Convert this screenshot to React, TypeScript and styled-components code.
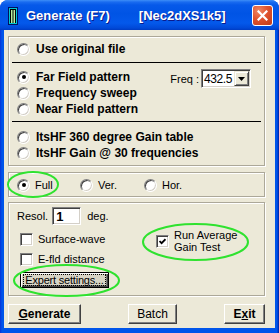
import React from "react"
import styled, { createGlobalStyle } from "styled-components"

/*==================== Global ====================*/

const GlobalStyle = createGlobalStyle`
    html, body {
        margin: 0;
        padding: 0;
        background: #ffffff;
    }

    body {
        font-family: "Liberation Sans", Arial, sans-serif;
        font-size: 11px;
        color: #000000;
    }
`

const SANS = `"Liberation Sans", Arial, sans-serif`

/*==================== Window chrome ====================*/

const Window = styled.div`
    width: 279px;
    height: 333px;
    display: flex;
    flex-direction: column;
    background: linear-gradient(90deg, #0831d9 0, #0055ea 2px, #0055ea 277px, #001ea0 279px);
    border-radius: 8px 8px 0 0;
    overflow: hidden;
`

const TitleBar = styled.div`
    flex: none;
    height: 30px;
    box-sizing: border-box;
    display: flex;
    align-items: center;
    padding: 1px 6px 0 8px;
    background: linear-gradient(
        180deg,
        #3d8ef7 0px,
        #1a6cf0 2px,
        #0659e9 5px,
        #0054e5 14px,
        #0459eb 23px,
        #0049d8 28px,
        #003cc2 30px
    );
    color: #ffffff;
    font: bold 13px ${SANS};
    text-shadow: 1px 1px #0b1a8c;
    white-space: nowrap;
`

const AppIcon = styled.svg`
    flex: none;
    margin-right: 8px;
`

const TitleTag = styled.span`
    margin-left: 29px;
`

const CloseButton = styled.div`
    flex: none;
    margin-left: auto;
    width: 21px;
    height: 21px;
    box-sizing: border-box;
    border: 1px solid #ffffff;
    border-radius: 3px;
    background: radial-gradient(circle at 30% 25%, #ee8866 0%, #e0532e 45%, #c23a17 100%);
    display: flex;
    align-items: center;
    justify-content: center;
`

const Client = styled.div`
    flex: 1;
    margin: 0 4px 5px 4px;
    padding: 6px 10px 4px 4px;
    background: #ece9d8;
    display: flex;
    flex-direction: column;
    box-sizing: border-box;
`

/*==================== Groups ====================*/

const Group = styled.div<{ $pad: string; $mt?: number }>`
    position: relative;
    border: 1px solid #aca899;
    box-shadow: inset 1px 1px #ffffff, 1px 1px #ffffff;
    padding: ${({ $pad }) => $pad};
    margin-top: ${({ $mt }) => $mt || 0}px;
`

const Rule = styled.div<{ $above: number; $below: number }>`
    height: 1px;
    background: #000000;
    margin: ${({ $above, $below }) => `${$above}px 0 ${$below}px -5px`};
`

const FarBlock = styled.div`
    display: flex;
    align-items: flex-start;
`

const OptionColumn = styled.div`
    display: flex;
    flex-direction: column;
`

const OptionRow = styled.label<{ $bold?: boolean }>`
    position: relative;
    display: flex;
    align-items: center;
    height: 16px;
    gap: ${({ $bold }) => ($bold ? 6 : 5)}px;
    font: ${({ $bold }) => ($bold ? `bold 12px ${SANS}` : `11px ${SANS}`)};
    white-space: nowrap;
`

const RadioMark = styled.span<{ $checked?: boolean }>`
    position: relative;
    flex: none;
    width: 13px;
    height: 13px;
    box-sizing: border-box;
    border-radius: 50%;
    background: #ffffff;
    border: 1px solid;
    border-color: #808080 #ffffff #ffffff #808080;
    box-shadow: inset 1px 1px #404040, inset -1px -1px #d4d0c8;

    &::after {
        content: "";
        display: ${({ $checked }) => ($checked ? "block" : "none")};
        position: absolute;
        left: 3.5px;
        top: 3.5px;
        width: 4px;
        height: 4px;
        border-radius: 50%;
        background: #000000;
    }
`

const FreqField = styled.div`
    display: flex;
    align-items: center;
    gap: 2px;
    margin-left: auto;
    margin-right: 10px;
    font: 11px ${SANS};
`

const Combo = styled.div`
    width: 50px;
    height: 19px;
    box-sizing: border-box;
    display: flex;
    align-items: stretch;
    padding: 1px 1px 1px 2px;
    background: #ffffff;
    border: 1px solid;
    border-color: #808080 #ffffff #ffffff #808080;
    box-shadow: inset 1px 1px #404040, inset -1px -1px #d4d0c8;
`

const ComboValue = styled.span`
    flex: 1;
    display: flex;
    align-items: center;
    font: 12px ${SANS};
    letter-spacing: -0.4px;
`

const ComboArrow = styled.span`
    width: 15px;
    box-sizing: border-box;
    background: #ece9d8;
    border: 1px solid;
    border-color: #ece9d8 #404040 #404040 #ece9d8;
    box-shadow: inset 1px 1px #ffffff, inset -1px -1px #808080;
    display: flex;
    align-items: center;
    justify-content: center;
`

const ModeGrid = styled.div`
    display: grid;
    grid-template-columns: 63px 64px auto;
`

/*==================== Settings group ====================*/

const SettingsGrid = styled.div`
    display: grid;
    grid-template-columns: 139px auto;
`

const LeftColumn = styled.div`
    display: flex;
    flex-direction: column;
`

const ResolRow = styled.div`
    display: flex;
    align-items: center;
    height: 18px;
    font: 11px ${SANS};
`

const NumInput = styled.span`
    width: 29px;
    height: 18px;
    box-sizing: border-box;
    margin: 0 6px 0 4px;
    padding-left: 3px;
    display: flex;
    align-items: center;
    background: #ffffff;
    border: 1px solid;
    border-color: #808080 #ffffff #ffffff #808080;
    box-shadow: inset 1px 1px #404040, inset -1px -1px #d4d0c8;
    font: bold 13px ${SANS};
`

const CheckRow = styled.label<{ $mt: number }>`
    position: relative;
    display: flex;
    align-items: center;
    gap: 5px;
    height: 16px;
    margin: ${({ $mt }) => $mt}px 0 0 3px;
    font: 11px ${SANS};
    white-space: nowrap;
`

const CheckMark = styled.span`
    flex: none;
    width: 13px;
    height: 13px;
    box-sizing: border-box;
    background: #ffffff;
    border: 1px solid;
    border-color: #808080 #ffffff #ffffff #808080;
    box-shadow: inset 1px 1px #404040, inset -1px -1px #d4d0c8;
    display: flex;
    align-items: center;
    justify-content: center;
`

const RightColumn = styled.div`
    padding-top: 22px;
`

const AverageRow = styled.label`
    position: relative;
    display: inline-flex;
    align-items: center;
    gap: 5px;
    font: 11px ${SANS};
    white-space: nowrap;
`

const TwoLines = styled.span`
    line-height: 12px;
`

const ExpertButton = styled.div`
    position: relative;
    margin: 5px 0 0 3px;
    width: 89px;
    height: 16px;
    box-sizing: border-box;
    border: 1px solid #000000;
    background: #d8d4c5;
    box-shadow: inset 1px 1px #ffffff, inset -1px -1px #404040, inset -2px -2px #808080;
    display: flex;
    align-items: center;
    justify-content: center;
    font: 11px ${SANS};
    letter-spacing: -0.2px;
    white-space: nowrap;
`

const FocusText = styled.span`
    outline: 1px dotted #000000;
    line-height: 10px;
    padding: 0 1px;
`

/*==================== Buttons ====================*/

const ButtonBar = styled.div`
    display: flex;
    justify-content: space-between;
    margin-top: 8px;
`

const PushButton = styled.div<{ $width: number; $bold?: boolean }>`
    width: ${({ $width }) => $width}px;
    height: 20px;
    box-sizing: border-box;
    background: #ece9d8;
    border: 1px solid;
    border-color: #ffffff #404040 #404040 #ffffff;
    box-shadow: inset -1px -1px #808080;
    display: flex;
    align-items: center;
    justify-content: center;
    font: ${({ $bold }) => ($bold ? `bold 12px ${SANS}` : `12px ${SANS}`)};
`

/*==================== Annotations ====================*/

const Ring = styled.svg`
    position: absolute;
    overflow: visible;
    pointer-events: none;
`

const Ellipse = ({ left, top, width, height }: { left: number; top: number; width: number; height: number }) => (
    <Ring style={{ left, top }} width={width} height={height}>
        <ellipse cx={width / 2} cy={height / 2} rx={width / 2 - 1} ry={height / 2 - 1} fill="none" stroke="#2fe22f" strokeWidth="2" />
    </Ring>
)

/*==================== Component ====================*/

const Radio = ({ checked, bold, children }: { checked?: boolean; bold?: boolean; children: React.ReactNode }) => (
    <OptionRow $bold={bold}>
        <RadioMark $checked={checked} />
        {children}
    </OptionRow>
)

const Tick = () => (
    <svg width="7" height="7" viewBox="0 0 7 7">
        <polyline points="0.5,3 2.6,5.2 6.5,1.2" fill="none" stroke="#000" strokeWidth="1.8" />
    </svg>
)

export default function App() {
    return (
        <>
            <GlobalStyle />
            <Window>
                <TitleBar>
                    <AppIcon width="10" height="18" viewBox="0 0 10 18">
                        <rect x="0.5" y="0.5" width="9" height="17" fill="#00c8d0" stroke="#001060" />
                        <rect x="2" y="2" width="6" height="14" fill="#b8f0a0" />
                        <path d="M2 2.5h6M2.5 3v13M5 3v13M7.5 3v13" stroke="#000" strokeWidth="1" />
                    </AppIcon>
                    <span>Generate (F7)</span>
                    <TitleTag>[Nec2dXS1k5]</TitleTag>
                    <CloseButton>
                        <svg width="11" height="11" viewBox="0 0 11 11">
                            <path d="M1.5 1.5L9.5 9.5M9.5 1.5L1.5 9.5" stroke="#fff" strokeWidth="2.2" strokeLinecap="square" />
                        </svg>
                    </CloseButton>
                </TitleBar>

                <Client>
                    <Group $pad="4px 3px 4px 8px">
                        <Radio bold>Use original file</Radio>
                        <Rule $above={5} $below={6} />
                        <FarBlock>
                            <OptionColumn>
                                <Radio bold checked>
                                    Far Field pattern
                                </Radio>
                                <Radio bold>Frequency sweep</Radio>
                                <Radio bold>Near Field pattern</Radio>
                            </OptionColumn>
                            <FreqField>
                                <span>Freq :</span>
                                <Combo>
                                    <ComboValue>432.5</ComboValue>
                                    <ComboArrow>
                                        <svg width="7" height="4" viewBox="0 0 7 4">
                                            <path d="M0 0h7L3.5 4z" fill="#000" />
                                        </svg>
                                    </ComboArrow>
                                </Combo>
                            </FreqField>
                        </FarBlock>
                        <Rule $above={4} $below={7} />
                        <Radio bold>ItsHF 360 degree Gain table</Radio>
                        <Radio bold>ItsHF Gain @ 30 frequencies</Radio>
                    </Group>

                    <Group $pad="4px 0 3px 8px" $mt={6}>
                        <ModeGrid>
                            <Radio checked>
                                Full
                                <Ellipse left={-10} top={-6} width={52} height={27} />
                            </Radio>
                            <Radio>Ver.</Radio>
                            <Radio>Hor.</Radio>
                        </ModeGrid>
                    </Group>

                    <Group $pad="4px 0 7px 8px" $mt={5}>
                        <SettingsGrid>
                            <LeftColumn>
                                <ResolRow>
                                    Resol.
                                    <NumInput>1</NumInput>
                                    deg.
                                </ResolRow>
                                <CheckRow $mt={6}>
                                    <CheckMark />
                                    Surface-wave
                                </CheckRow>
                                <CheckRow $mt={4}>
                                    <CheckMark />
                                    E-fld distance
                                </CheckRow>
                                <ExpertButton>
                                    <FocusText>Expert settings...</FocusText>
                                    <Ellipse left={-8} top={-9} width={107} height={33} />
                                </ExpertButton>
                            </LeftColumn>
                            <RightColumn>
                                <AverageRow>
                                    <CheckMark>
                                        <Tick />
                                    </CheckMark>
                                    <TwoLines>
                                        Run Average
                                        <br />
                                        Gain Test
                                    </TwoLines>
                                    <Ellipse left={-14} top={-6} width={107} height={38} />
                                </AverageRow>
                            </RightColumn>
                        </SettingsGrid>
                    </Group>

                    <ButtonBar>
                        <PushButton $width={73} $bold>
                            <span>
                                <u>G</u>enerate
                            </span>
                        </PushButton>
                        <PushButton $width={49}>Batch</PushButton>
                        <PushButton $width={41} $bold>
                            <span>
                                E<u>x</u>it
                            </span>
                        </PushButton>
                    </ButtonBar>
                </Client>
            </Window>
        </>
    )
}
